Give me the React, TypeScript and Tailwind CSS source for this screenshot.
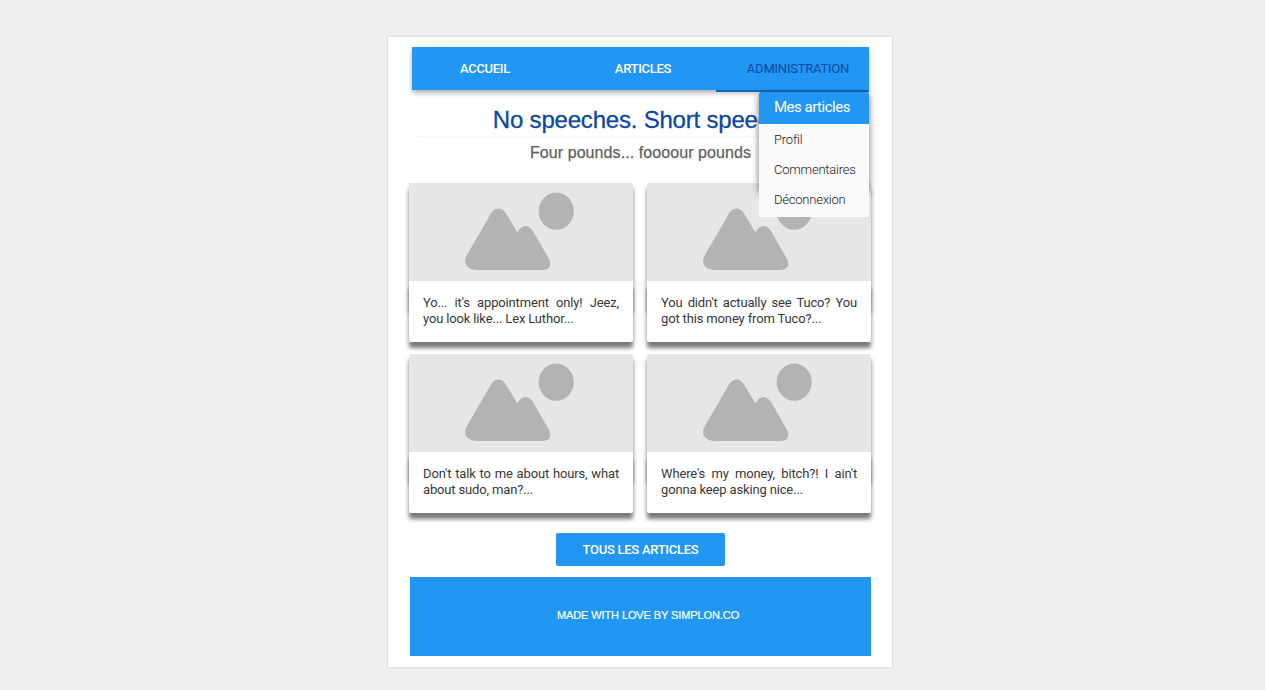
const cards = [
  ["Yo... it's appointment only! Jeez,", "you look like... Lex Luthor..."],
  ["You didn't actually see Tuco? You", "got this money from Tuco?..."],
  ["Don't talk to me about hours, what", "about sudo, man?..."],
  ["Where's my money, bitch?! I ain't", "gonna keep asking nice..."],
];

function Placeholder() {
  return (
    <svg className="block h-[98px] w-[224px]" viewBox="0 0 224 98">
      <rect width="224" height="98" fill="#e6e6e6" />
      <ellipse cx="147.2" cy="28.2" rx="17.6" ry="18.6" fill="#b3b3b3" />
      <path
        d="M80 34 C85 22.800 93.500 22.800 98.500 33 L108.300 49.200 C113 41.300 119 40.800 124 48 L139.500 75 C143.500 82 140.500 87 133.500 87 L68 87 C57.500 87 53 80 58.500 71 Z"
        fill="#b3b3b3"
      />
    </svg>
  );
}

function Card({ lines }: { lines: string[] }) {
  return (
    <article className="relative isolate h-[159px] w-[224px]">
      <div className="absolute inset-x-0 top-[105px] -z-10 h-[24px] shadow-[0_1px_4px_rgba(0,0,0,0.45)]" />
      <div className="h-[159px] rounded-b-[2px] bg-white shadow-[0_6px_4px_rgba(0,0,0,0.53)]">
        <Placeholder />
        <div className="whitespace-nowrap px-[14px] pt-[14px] text-[13px] leading-4 tracking-[-0.15px] text-[#383838]">
          <p className="[text-align-last:justify]">{lines[0]}</p>
          <p>{lines[1]}</p>
        </div>
      </div>
    </article>
  );
}

export default function App() {
  return (
    <div className="h-[690px] bg-[#eeeeee] pl-[387px] pt-[36px] font-['Roboto',sans-serif]">
      <main className="flex h-[632px] w-[506px] flex-col rounded-[2px] border border-[#e0e0e0] bg-white pl-[21px] pt-[10px]">
        <nav className="relative ml-[3px] flex h-[43px] w-[457px] bg-[#2196f3] text-[13px] font-medium leading-[43px] tracking-[-0.3px] text-white shadow-[0_3px_5px_rgba(0,0,0,0.3)]">
          <a className="w-[146px] text-center">ACCUEIL</a>
          <a className="w-[158px] pl-[12px] text-center">ARTICLES</a>
          <a className="h-[45px] w-[153px] border-b-2 border-[#1565c0] pl-[11px] text-center font-normal tracking-[-0.22px] text-[#0d47a1]">ADMINISTRATION</a>
          <div className="absolute right-0 top-[45px] isolate z-10 h-[125px] w-[110px] text-[13px] font-light leading-[30px] tracking-[-0.22px] text-[#212121]">
            <div className="absolute inset-x-0 top-0 -z-10 h-[98px] shadow-[0_3px_7px_rgba(0,0,0,0.55)]" />
            <div className="h-[125px] bg-[#fafafa]">
              <div className="mb-px h-8 rounded-t-[2px] bg-[#2196f3] pl-[15px] text-[15px] font-normal tracking-[-0.5px] text-white">Mes articles</div>
              <div className="pl-[15px]">Profil</div>
              <div className="pl-[15px]">Commentaires</div>
              <div className="pl-[15px]">Déconnexion</div>
            </div>
          </div>
        </nav>
        <header className="ml-[7px] mt-[15px] w-[450px] text-center font-['Liberation_Sans',sans-serif]">
          <h1 className="h-[32px] border-b border-dotted border-[#ececec] text-[24px] leading-[30px] tracking-[-0.2px] text-[#0d47a1] [-webkit-text-stroke:0.3px_#0d47a1]">No speeches. Short speech.</h1>
          <h2 className="mt-[5px] pr-px text-[16px] leading-[22px] tracking-[0.08px] text-[#616161] [-webkit-text-stroke:0.25px_#616161]">Four pounds... foooour pounds</h2>
        </header>
        <section className="mt-[19px] grid grid-cols-[224px_224px] gap-x-[14px] gap-y-3">
          {cards.map((c) => <Card key={c[0]} lines={c} />)}
        </section>
        <button className="ml-[147px] mt-5 h-[33px] w-[169px] shrink-0 rounded-[2px] bg-[#2196f3] text-[13px] font-medium tracking-[-0.27px] text-white">TOUS LES ARTICLES</button>
        <footer className="ml-px mt-[11px] h-[79px] w-[461px] shrink-0 bg-[#2196f3] pl-[15px] text-center font-['Liberation_Sans',sans-serif] text-[11px] leading-[77px] tracking-[-0.1px] text-white [-webkit-text-stroke:0.2px_white]">MADE WITH LOVE BY SIMPLON.CO</footer>
      </main>
    </div>
  );
}
